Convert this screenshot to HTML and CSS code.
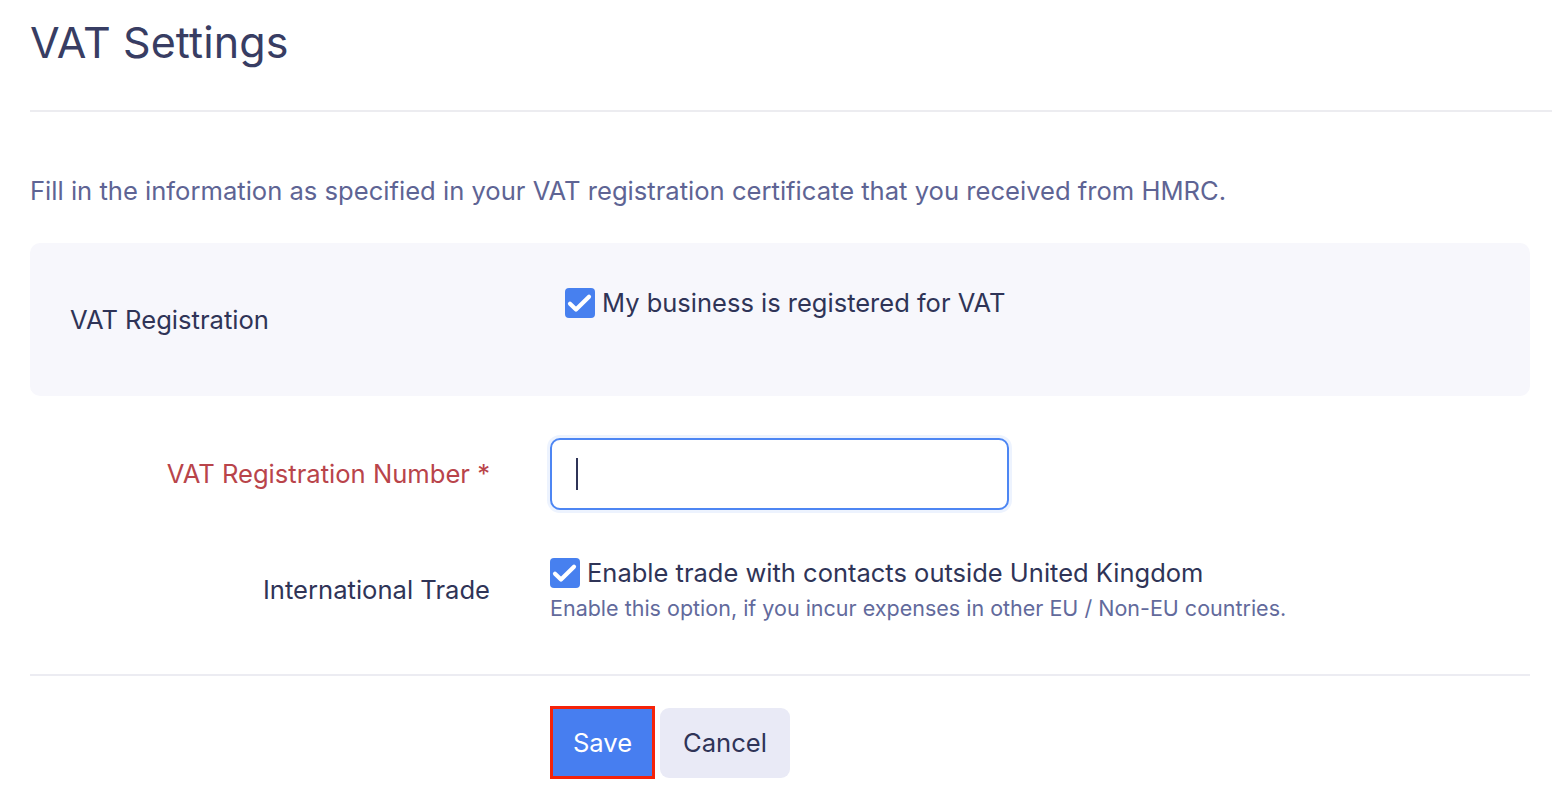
FILE: index.html
```html
<!DOCTYPE html>
<html lang="en">
<head>
<meta charset="utf-8">
<title>VAT Settings</title>
<link rel="stylesheet" href="styles.css">
</head>
<body>
<div class="page">
  <header class="head">
    <h1 class="title">VAT Settings</h1>
  </header>
  <p class="intro">Fill in the information as specified in your VAT registration certificate that you received from HMRC.</p>
  <div class="panel">
    <div class="panel-label">VAT Registration</div>
    <label class="check panel-check">
      <span class="box"><svg viewBox="0 0 30 30" width="30" height="30"><path d="M5 15.8 L11 21.6 L24 8.8" fill="none" stroke="#fff" stroke-width="4.2" stroke-linecap="round" stroke-linejoin="round"/></svg></span>
      <span class="check-text">My business is registered for VAT</span>
    </label>
  </div>
  <div class="row">
    <div class="label required">VAT Registration Number *</div>
    <div class="field">
      <div class="input"><span class="caret"></span></div>
    </div>
  </div>
  <div class="row row-trade">
    <div class="label">International Trade</div>
    <div class="field">
      <label class="check">
        <span class="box"><svg viewBox="0 0 30 30" width="30" height="30"><path d="M5 15.8 L11 21.6 L24 8.8" fill="none" stroke="#fff" stroke-width="4.2" stroke-linecap="round" stroke-linejoin="round"/></svg></span>
        <span class="check-text">Enable trade with contacts outside United Kingdom</span>
      </label>
      <div class="hint">Enable this option, if you incur expenses in other EU / Non-EU countries.</div>
    </div>
  </div>
  <div class="actions">
    <button class="btn btn-save">Save</button>
    <button class="btn btn-cancel">Cancel</button>
  </div>
</div>
</body>
</html>
```

FILE: styles.css
```css
* { box-sizing: border-box; }
html, body { margin: 0; padding: 0; background: #fff; }
body {
  font-family: Inter, "Noto Sans", "Liberation Sans", sans-serif;
  color: #2f3457;
}
.page { padding-left: 30px; }
.head {
  padding-top: 14px;
  padding-bottom: 40px;
  border-bottom: 2px solid #ececf0;
}
.title {
  margin: 0;
  font-size: 43px;
  line-height: 56px;
  font-weight: 400;
  color: #383d63;
  letter-spacing: 0.1px;
}
.intro {
  margin: 61px 0 34px;
  font-size: 25.6px;
  line-height: 36px;
  color: #5e6494;
}
.panel {
  width: 1500px;
  height: 153px;
  background: #f7f7fc;
  border-radius: 10px;
  padding: 0 40px;
  display: grid;
  grid-template-columns: 495px 1fr;
}
.panel-label {
  align-self: center;
  font-size: 25.6px;
  line-height: 32px;
}
.panel-check { align-self: start; margin-top: 45px; }
.check {
  display: flex;
  align-items: center;
  gap: 7px;
  font-size: 25.5px;
  line-height: 30px;
  color: #2f3457;
}
.box {
  width: 30px;
  height: 30px;
  border-radius: 4px;
  background: #4780ef;
  display: flex;
  flex: none;
}
.box svg { display: block; width: 30px; height: 30px; }
.row {
  display: flex;
  align-items: center;
  width: 1500px;
}
.row .label {
  width: 460px;
  text-align: right;
  font-size: 25.6px;
  line-height: 32px;
  margin-right: 60px;
  flex: none;
}
.row .label.required { color: #b9444a; }
.panel + .row { margin-top: 42px; }
.input {
  width: 459px;
  height: 72px;
  border: 2px solid #4d86f3;
  border-radius: 10px;
  box-shadow: 0 0 0 3px rgba(77, 134, 243, 0.10);
  display: flex;
  align-items: center;
  padding-left: 24px;
  background: #fff;
}
.caret {
  width: 2px;
  height: 32px;
  background: #2f3457;
}
.row-trade { margin-top: 48px; }
.hint {
  margin-top: 6px;
  font-size: 21.5px;
  line-height: 28px;
  color: #626a9c;
}
.actions {
  width: 1500px;
  margin-top: 52px;
  border-top: 2px solid #ececf2;
  padding-top: 30px;
  padding-left: 520px;
  display: flex;
  align-items: center;
  gap: 5px;
}
.btn {
  font-family: inherit;
  font-size: 25.6px;
  cursor: pointer;
}
.btn-save {
  width: 105px;
  height: 73px;
  background: #477ef0;
  color: #fff;
  border: 3px solid #f5230a;
  border-radius: 0;
  padding: 0;
}
.btn-cancel {
  width: 130px;
  height: 70px;
  background: #e9eaf6;
  color: #2f3457;
  border: none;
  border-radius: 9px;
  padding: 0;
}
```
